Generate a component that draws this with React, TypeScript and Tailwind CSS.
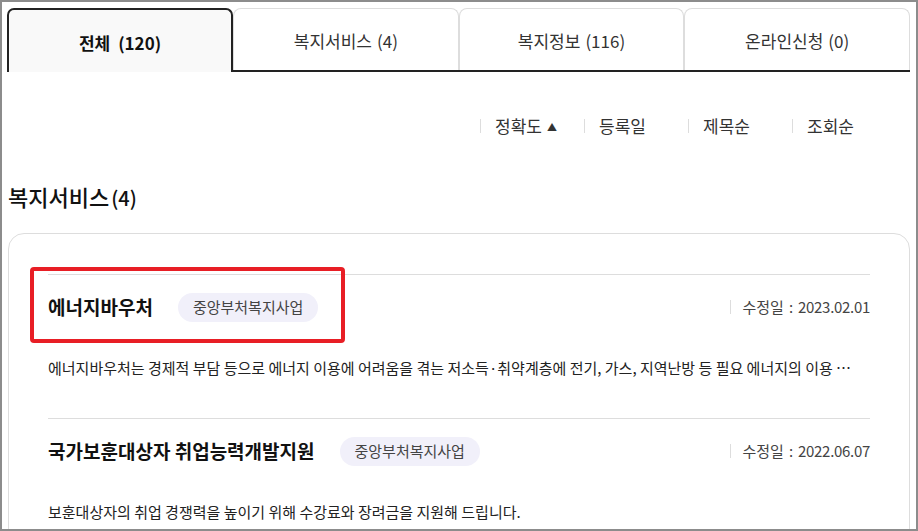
import React from 'react';

const TABS = [
  { label: '전체', count: '(120)', active: true },
  { label: '복지서비스', count: '(4)' },
  { label: '복지정보', count: '(116)' },
  { label: '온라인신청', count: '(0)' },
];

const SORTS = ['정확도', '등록일', '제목순', '조회순'];

const ITEMS = [
  {
    title: '에너지바우처',
    badge: '중앙부처복지사업',
    date: '2023.02.01',
    desc: '에너지바우처는 경제적 부담 등으로 에너지 이용에 어려움을 겪는 저소득·취약계층에 전기, 가스, 지역난방 등 필요 에너지의 이용 …',
  },
  {
    title: '국가보훈대상자 취업능력개발지원',
    badge: '중앙부처복지사업',
    date: '2022.06.07',
    desc: '보훈대상자의 취업 경쟁력을 높이기 위해 수강료와 장려금을 지원해 드립니다.',
  },
];

const App: React.FC = () => {
  return (
    <div className="w-[918px] h-[531px] overflow-hidden bg-white border-2 border-[#8c8c8c] font-['Noto_Sans_CJK_KR','Noto_Sans',sans-serif] text-[#222]">
      <div className="pt-[6px] pl-[5px] pr-[6px]">
        {/* tabs */}
        <div className="flex h-[64px]">
          {TABS.map((tab) =>
            tab.active ? (
              <div
                key={tab.label}
                className="w-[226px] shrink-0 flex items-center justify-center pt-[3px] bg-[#f9f9f9] border-2 border-b-0 border-[#222] rounded-t-[7px] text-[17px] font-bold text-[#111]"
              >
                {tab.label}
                <span className="ml-[8px]">{tab.count}</span>
              </div>
            ) : (
              <div key={tab.label} className="flex-1 flex flex-col">
                <div className="flex-1 flex items-center justify-center pt-[3px] border border-b-0 border-[#dddddd] rounded-t-[8px] text-[17px] text-[#333]">
                  {tab.label}
                  <span className="ml-[5px]">{tab.count}</span>
                </div>
                <div className="h-[2px] bg-[#222]" />
              </div>
            )
          )}
        </div>

        {/* sort */}
        <div className="mt-[44px] flex justify-end pr-[14px] h-[20px]">
          {SORTS.map((s, i) => (
            <div key={s} className="w-[104px] flex items-center">
              <span className="w-px h-[14px] bg-[#dddddd]" />
              <span className="ml-[14px] text-[17px] leading-[20px] text-[#333]">{s}</span>
              {i === 0 && <span className="ml-[5px] text-[10px] text-[#333]">▲</span>}
            </div>
          ))}
        </div>

        {/* heading */}
        <h2 className="mt-[45px] pl-[1px] text-[22px] leading-[30px] font-medium text-[#111]">
          복지서비스<span className="ml-[2px] text-[20px]">(4)</span>
        </h2>

        {/* card */}
        <div className="relative mt-[20px] ml-[1px] border border-[#dddddd] rounded-[16px] px-[39px] pt-[40px] h-[400px]">
          {ITEMS.map((item) => (
            <div key={item.title} className="border-t border-[#dddddd] pt-[17px] pb-[38px]">
              <div className="flex items-center h-[30px]">
                <h3 className="text-[19px] font-bold text-[#111]">{item.title}</h3>
                <span className="ml-[25px] h-[29px] px-[15px] flex items-center rounded-full bg-[#f1f0fa] text-[15px] text-[#444]">
                  {item.badge}
                </span>
                <div className="ml-auto flex items-center text-[15px] text-[#444]">
                  <span className="w-px h-[14px] bg-[#dddddd] mr-[11px]" />
                  수정일
                  <span className="mx-[5px]">:</span>
                  <span className="tracking-[-0.3px]">{item.date}</span>
                </div>
              </div>
              <p className="mt-[34px] text-[15px] leading-[24px] text-[#222] truncate">{item.desc}</p>
            </div>
          ))}
          <div className="absolute left-[21px] top-[33px] w-[315px] h-[76px] border-4 border-[#e81e25] rounded-[4px]" />
        </div>
      </div>
    </div>
  );
};

export default App;
